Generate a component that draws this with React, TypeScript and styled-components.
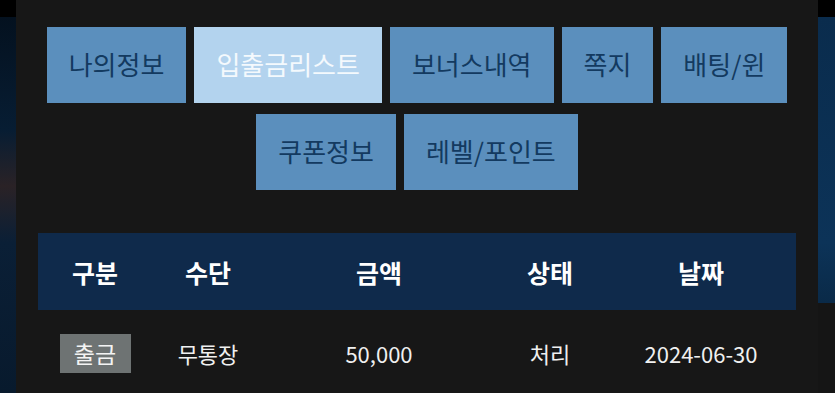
import styled, { createGlobalStyle } from "styled-components";

const GlobalStyle = createGlobalStyle`
    html, body {
        margin: 0;
        padding: 0;
        background: #151515;
        font-family: "Noto Sans CJK KR", "Noto Sans", sans-serif;
    }
`;

const tabs = [
    ["나의정보", "입출금리스트", "보너스내역", "쪽지", "배팅/윈"],
    ["쿠폰정보", "레벨/포인트"],
];

const rows = [
    { type: "출금", method: "무통장", amount: "50,000", status: "처리", date: "2024-06-30" },
];

const App = () => {
    return (
        <Page>
            <GlobalStyle />
            <SideLeft />
            <Panel>
                <TabGroup>
                    {tabs.map((row, i) => (
                        <TabRow key={i}>
                            {row.map((t) => (
                                <TabButton key={t} $active={t === "입출금리스트"}>{t}</TabButton>
                            ))}
                        </TabRow>
                    ))}
                </TabGroup>
                <Table>
                    <HeadRow>
                        <span>구분</span>
                        <span>수단</span>
                        <span>금액</span>
                        <span>상태</span>
                        <span>날짜</span>
                    </HeadRow>
                    {rows.map((r, i) => (
                        <BodyRow key={i}>
                            <span><Badge>{r.type}</Badge></span>
                            <span>{r.method}</span>
                            <span>{r.amount}</span>
                            <span>{r.status}</span>
                            <span>{r.date}</span>
                        </BodyRow>
                    ))}
                </Table>
            </Panel>
            <SideRight />
        </Page>
    );
};

const Page = styled.div`
    display: flex;
    width: 835px;
    height: 393px;
    overflow: hidden;
    background: #000;
`;

const SideLeft = styled.div`
    width: 16px;
    flex-shrink: 0;
    margin-top: 17px;
    background: linear-gradient(180deg, #04111f 0%, #071d33 30%, #2a2226 45%, #0a1f36 60%, #081a2d 100%);
`;

const SideRight = styled.div`
    width: 17px;
    flex-shrink: 0;
    margin-top: 17px;
    background: linear-gradient(180deg, #0a2c4d 0%, #0c3358 60%, #0a2a48 76%, #151515 76%);
`;

const Panel = styled.div`
    width: 802px;
    flex-shrink: 0;
    background: #171717;
    padding-top: 27px;
    box-sizing: border-box;
`;

const TabGroup = styled.div`
    display: flex;
    flex-direction: column;
    gap: 11px;
`;

const TabRow = styled.div`
    display: flex;
    justify-content: center;
    gap: 8px;
`;

const TabButton = styled.div<{ $active?: boolean }>`
    height: 76px;
    line-height: 74px;
    padding: 0 22px;
    font-size: 26px;
    background: ${(p) => (p.$active ? "#b3d3ee" : "#5b8fbd")};
    color: ${(p) => (p.$active ? "#f4f9fd" : "#133a60")};
    white-space: nowrap;
`;

const Table = styled.div`
    margin: 43px 22px 0 22px;
`;

const Cols = styled.div`
    display: grid;
    grid-template-columns: 114px 112px 230px 112px 190px;
    align-items: center;
    > span {
        display: flex;
        justify-content: center;
        align-items: center;
    }
`;

const HeadRow = styled(Cols)`
    height: 77px;
    background: #0f2a4b;
    color: #ffffff;
    font-size: 25px;
    font-weight: 700;
`;

const BodyRow = styled(Cols)`
    height: 86px;
    color: #f0f0f0;
    font-size: 22px;
`;

const Badge = styled.span`
    display: inline-block;
    background: #6e7373;
    color: #f3f3f3;
    width: 71px;
    height: 39px;
    line-height: 38px;
    font-size: 23px;
    text-align: center;
`;

export default App;
